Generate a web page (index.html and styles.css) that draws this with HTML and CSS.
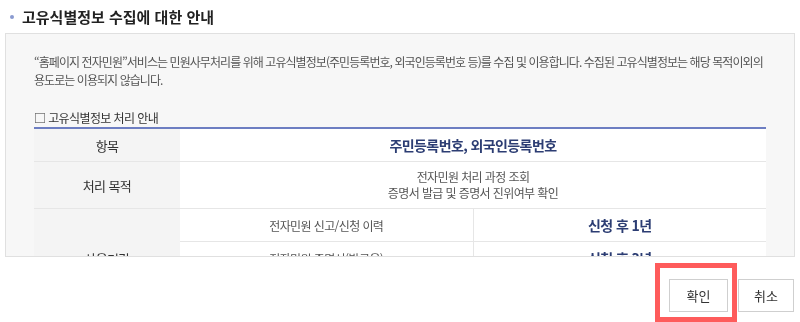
FILE: index.html
```html
<!DOCTYPE html>
<html lang="ko">
<head>
  <meta charset="UTF-8">
  <meta name="viewport" content="width=device-width, initial-scale=1.0">
  <title>고유식별정보 수집에 대한 안내</title>
  <link rel="stylesheet" href="styles.css">
</head>
<body>
  <h3 class="title">고유식별정보 수집에 대한 안내</h3>
  <div class="agree-box">
    <div class="agree-inner">
      <p class="desc">“홈페이지 전자민원”서비스는 민원사무처리를 위해 고유식별정보(주민등록번호, 외국인등록번호 등)를 수집 및 이용합니다. 수집된 고유식별정보는 해당 목적이외의 용도로는 이용되지 않습니다.</p>
      <h4 class="sub-title">□ 고유식별정보 처리 안내</h4>
      <table class="info-table">
        <colgroup>
          <col class="col-th">
          <col class="col-td">
          <col class="col-td">
        </colgroup>
        <tr class="row-head">
          <th>항목</th>
          <td colspan="2" class="strong">주민등록번호, 외국인등록번호</td>
        </tr>
        <tr class="row-purpose">
          <th>처리 목적</th>
          <td colspan="2">전자민원 처리 과정 조회<br>증명서 발급 및 증명서 진위여부 확인</td>
        </tr>
        <tr>
          <th rowspan="3">사용기간</th>
          <td class="line">전자민원 신고/신청 이력</td>
          <td class="strong">신청 후 1년</td>
        </tr>
        <tr>
          <td class="line">전자민원 증명서(발급용)</td>
          <td class="strong">신청 후 3년</td>
        </tr>
        <tr>
          <td class="line">전자민원 증명서(열람용)</td>
          <td class="strong">신청 후 1년</td>
        </tr>
      </table>
      <p class="note">※ 고유식별정보 수집에 동의하지 않으실 경우 전자민원 서비스 이용이 제한될 수 있습니다.<br>※ 사용기간이 지난 고유식별정보는 관련 법령에 따라 지체 없이 파기합니다.</p>
    </div>
  </div>
  <div class="btn-area">
    <button class="btn">확인</button>
    <button class="btn">취소</button>
  </div>
  <span class="mark"></span>
</body>
</html>
```

FILE: styles.css
```css
html, body {
  margin: 0;
  padding: 0;
  background: #fff;
}

body {
  font-family: "Noto Sans CJK KR", "Noto Sans", sans-serif;
  color: #333;
  position: relative;
  height: 322px;
  overflow: hidden;
}

.title {
  display: flex;
  align-items: center;
  height: 33px;
  margin: 0;
  padding-left: 10px;
  box-sizing: border-box;
  font-size: 15px;
  font-weight: 700;
  color: #222;
}

.title::before {
  content: "";
  width: 4px;
  height: 4px;
  border-radius: 50%;
  background: #8a9ad0;
  margin-right: 8px;
}

.agree-box {
  height: 224px;
  margin: 0 5px;
  box-sizing: border-box;
  border: 1px solid #e0e0e0;
  background: #f7f7f7;
  overflow-y: scroll;
  padding: 19px 0 55px 28px;
}

.agree-inner {
  width: 732px;
}

.agree-box::-webkit-scrollbar {
  width: 8px;
}

.agree-box::-webkit-scrollbar-track {
  background: #f7f7f7;
}

.agree-box::-webkit-scrollbar-thumb {
  background: #c6c6c6;
  border-radius: 3px;
  border: 1px solid #f7f7f7;
  border-left-width: 2px;
}

.desc {
  margin: 0;
  font-size: 12px;
  line-height: 18px;
  color: #555;
  letter-spacing: -0.94px;
}

.sub-title {
  margin: 20px 0 0;
  font-size: 12px;
  line-height: 18px;
  font-weight: 400;
  color: #333;
  letter-spacing: -0.6px;
  border-bottom: 2px solid #6d7ec2;
}

.info-table {
  width: 100%;
  table-layout: fixed;
  border-collapse: collapse;
  background: #fff;
  font-size: 12px;
  letter-spacing: -0.6px;
  color: #555;
}

.col-th {
  width: 146px;
}

.col-td {
  width: 293px;
}

.info-table th {
  background: #f4f4f4;
  font-weight: 400;
  font-size: 13px;
  color: #333;
  border-bottom: 1px solid #e6e6e6;
}

.info-table td {
  text-align: center;
  border-bottom: 1px solid #e6e6e6;
  height: 32px;
  padding: 0;
}

.info-table .row-head td,
.info-table .row-head th {
  height: 30px;
}

.info-table .row-purpose td {
  height: 46px;
  line-height: 16px;
}

.info-table td.line {
  border-right: 1px solid #e6e6e6;
}

.info-table .strong {
  font-size: 14px;
  font-weight: 700;
  color: #2c3d73;
}

.note {
  margin: 20px 0 0;
  font-size: 12px;
  line-height: 18px;
  color: #555;
  letter-spacing: -0.6px;
}

.btn-area {
  display: flex;
  justify-content: flex-end;
  gap: 10px;
  padding: 22px 6px 0 0;
}

.btn {
  height: 33px;
  width: 59px;
  padding: 0;
  border: 1px solid #cfcfcf;
  background: #fff;
  font-family: inherit;
  font-size: 13px;
  color: #333;
}

.btn + .btn {
  width: 56px;
}

/* 확인 버튼 강조 표시 */
.mark {
  position: absolute;
  left: 655px;
  top: 263px;
  width: 82px;
  height: 59px;
  box-sizing: border-box;
  border: 5px solid #fe5b5b;
}
```
